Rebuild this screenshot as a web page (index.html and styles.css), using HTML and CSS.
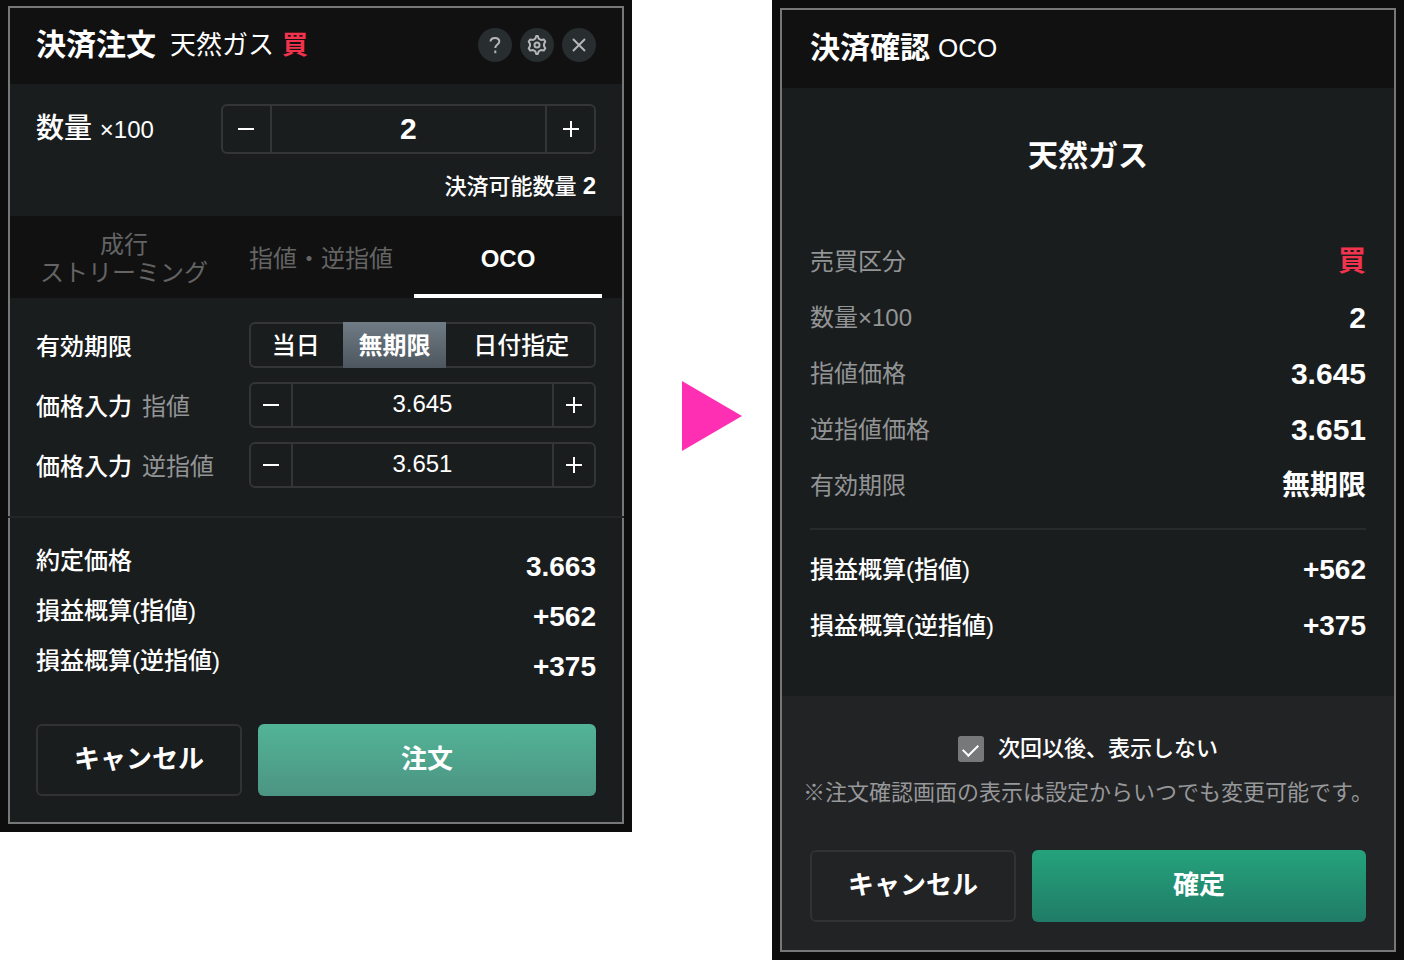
FILE: index.html
```html
<!DOCTYPE html>
<html lang="ja">
<head>
    <meta charset="UTF-8">
    <meta name="viewport" content="width=device-width, initial-scale=1.0">
    <title>決済注文</title>
    <link rel="stylesheet" href="styles.css">
</head>
<body>
    <main class="flow">
        <div class="step">
            <section class="screen">
                <div class="panel order">
                    <header class="panel-header">
                        <h1>決済注文</h1>
                        <span class="symbol">天然ガス</span>
                        <span class="side">買</span>
                        <div class="tools">
                            <button type="button" class="tool" aria-label="ヘルプ">
                                <svg viewBox="0 0 34 34"><path d="M12.5 13.5c.2-2.3 2-3.5 4.500-3.500s4.300 1.400 4.300 3.600c0 3-4 3-4 6.400" /><path d="M17.300 22.500v2.700" /></svg>
                            </button>
                            <button type="button" class="tool" aria-label="設定">
                                <svg viewBox="0 0 34 34"><path d="M15.300 10.700 16.200 8h1.600l.9 2.700 2.200 1.300 2.800-.6 1.600 2.200-1.300 2.400v2l1.300 2.400-1.600 2.200-2.800-.6-2.200 1.300-.9 2.700h-1.600l-.9-2.700-2.200-1.300-2.800.6-1.600-2.200L10 18v-2l-1.300-2.400 1.600-2.200 2.800.6z" /><circle cx="17" cy="17" r="2.500" /></svg>
                            </button>
                            <button type="button" class="tool" aria-label="閉じる">
                                <svg viewBox="0 0 34 34"><path d="M11 11l12 12M23 11L11 23" /></svg>
                            </button>
                        </div>
                    </header>

                    <div class="quantity">
                        <div class="field">
                            <label class="big-label" for="qty">数量 <small>×100</small></label>
                            <div class="stepper large">
                                <button type="button" aria-label="減らす"><svg viewBox="0 0 16 16"><path d="M0 8h16" /></svg></button>
                                <input type="text" id="qty" value="2">
                                <button type="button" aria-label="増やす"><svg viewBox="0 0 16 16"><path d="M0 8h16M8 0v16" /></svg></button>
                            </div>
                        </div>
                        <p class="available">決済可能数量 <b>2</b></p>
                    </div>

                    <nav class="tabs">
                        <button type="button">成行<br>ストリーミング</button>
                        <button type="button">指値・逆指値</button>
                        <button type="button" class="active">OCO</button>
                    </nav>

                    <div class="conditions">
                        <div class="field">
                            <span class="label">有効期限</span>
                            <div class="segments">
                                <button type="button">当日</button>
                                <button type="button" class="selected">無期限</button>
                                <button type="button">日付指定</button>
                            </div>
                        </div>
                        <div class="field">
                            <label class="label" for="limit">価格入力<span>指値</span></label>
                            <div class="stepper">
                                <button type="button" aria-label="減らす"><svg viewBox="0 0 16 16"><path d="M0 8h16" /></svg></button>
                                <input type="text" id="limit" value="3.645">
                                <button type="button" aria-label="増やす"><svg viewBox="0 0 16 16"><path d="M0 8h16M8 0v16" /></svg></button>
                            </div>
                        </div>
                        <div class="field">
                            <label class="label" for="stop">価格入力<span>逆指値</span></label>
                            <div class="stepper">
                                <button type="button" aria-label="減らす"><svg viewBox="0 0 16 16"><path d="M0 8h16" /></svg></button>
                                <input type="text" id="stop" value="3.651">
                                <button type="button" aria-label="増やす"><svg viewBox="0 0 16 16"><path d="M0 8h16M8 0v16" /></svg></button>
                            </div>
                        </div>
                    </div>

                    <dl class="summary">
                        <div><dt>約定価格</dt><dd>3.663</dd></div>
                        <div><dt>損益概算(指値)</dt><dd>+562</dd></div>
                        <div><dt>損益概算(逆指値)</dt><dd>+375</dd></div>
                    </dl>

                    <div class="actions">
                        <button type="button" class="cancel">キャンセル</button>
                        <button type="button" class="submit">注文</button>
                    </div>
                </div>
            </section>
            <svg class="arrow" viewBox="0 0 60 70"><path d="M0 0l60 35L0 70z" /></svg>
        </div>

        <section class="screen">
            <div class="panel confirm">
                <header class="panel-header">
                    <h1>決済確認</h1>
                    <span class="symbol">OCO</span>
                </header>

                <div class="details">
                    <h2>天然ガス</h2>
                    <dl>
                        <div><dt>売買区分</dt><dd class="side">買</dd></div>
                        <div><dt>数量×100</dt><dd class="number">2</dd></div>
                        <div><dt>指値価格</dt><dd class="number">3.645</dd></div>
                        <div><dt>逆指値価格</dt><dd class="number">3.651</dd></div>
                        <div><dt>有効期限</dt><dd>無期限</dd></div>
                    </dl>
                    <dl class="estimate">
                        <div><dt>損益概算(指値)</dt><dd>+562</dd></div>
                        <div><dt>損益概算(逆指値)</dt><dd>+375</dd></div>
                    </dl>
                </div>

                <footer>
                    <label class="skip"><input type="checkbox" checked>次回以後、表示しない</label>
                    <p class="note">※注文確認画面の表示は設定からいつでも変更可能です。</p>
                    <div class="actions">
                        <button type="button" class="cancel">キャンセル</button>
                        <button type="button" class="submit">確定</button>
                    </div>
                </footer>
            </div>
        </section>
    </main>
</body>
</html>
```
FILE: styles.css
```css
* {
    box-sizing: border-box;
}
body {
    margin: 0;
    background-color: white;
    color: white;
    font-family: "Liberation Sans", "Noto Sans CJK JP", sans-serif;
    font-size: 24px;
}
h1, h2, p, dl, dd {
    margin: 0;
}
button, input {
    margin: 0;
    padding: 0;
    border: none;
    background: none;
    color: inherit;
    font: inherit;
}
button {
    cursor: pointer;
}
svg {
    display: block;
    fill: none;
    stroke: currentColor;
    stroke-width: 2;
}
.flow {
    display: grid;
    grid-template-columns: 772fr 632fr;
    align-items: start;
}
.step {
    display: flex;
    align-items: center;
}
.step .screen {
    flex: 1;
    padding-top: 6px;
}
.screen {
    padding: 8px;
    background-color: #0d0d0d;
}
.arrow {
    width: 60px;
    height: 70px;
    margin: 0 30px 0 50px;
    fill: #ff2fb4;
    stroke: none;
}
.panel {
    border: 2px solid #777;
    background-color: #1a1d1e;
}

/* header */
.panel-header {
    display: flex;
    align-items: center;
    height: 76px;
    padding: 0 26px 2px;
    background-color: #111;
}
.panel-header h1 {
    font-size: 30px;
    line-height: 44px;
}
.symbol {
    margin-left: 14px;
    font-size: 26px;
}
.side {
    color: #f2334d;
    font-weight: bold;
}
.order .symbol, .order .side {
    padding-bottom: 6px;
}
.panel-header .side {
    margin-left: 8px;
    font-size: 26px;
}
.tools {
    display: flex;
    gap: 8px;
    margin-left: auto;
}
.tool {
    width: 34px;
    height: 34px;
    border-radius: 50%;
    background-color: #282d30;
    color: #b4b6b7;
}
.tool svg {
    stroke-linejoin: round;
}

/* form fields */
.field {
    display: flex;
    align-items: center;
    justify-content: space-between;
}
.quantity {
    height: 132px;
    padding: 20px 26px 0;
}
.big-label {
    padding-bottom: 6px;
    font-size: 28px;
    font-weight: 500;
}
.big-label small {
    font-size: 24px;
    font-weight: normal;
}
.label {
    padding-bottom: 2px;
    font-weight: 500;
}
.label span {
    margin-left: 10px;
    color: #929495;
    font-weight: normal;
}
.stepper {
    display: flex;
    width: 62%;
    height: 46px;
    border: 2px solid #333537;
    border-radius: 6px;
}
.stepper button {
    display: flex;
    align-items: center;
    justify-content: center;
    width: 40px;
}
.stepper svg {
    width: 16px;
    height: 16px;
}
.stepper input {
    flex: 1;
    min-width: 0;
    padding-bottom: 2px;
    border: solid #333537;
    border-width: 0 2px;
    text-align: center;
}
.stepper.large {
    width: 67%;
    height: 50px;
}
.large button {
    width: 47px;
}
.large input {
    padding: 0;
    font-size: 30px;
    font-weight: bold;
}
.available {
    margin-top: 16px;
    font-size: 22px;
    font-weight: 500;
    line-height: 32px;
    text-align: right;
}
.available b {
    font-size: 24px;
}
.tabs {
    display: grid;
    grid-template-columns: 208fr 186fr 188fr;
    height: 82px;
    padding: 0 20px 0 10px;
    background-color: #111;
}
.tabs button {
    padding-top: 4px;
    color: #646464;
    line-height: 28px;
    white-space: nowrap;
}
.tabs .active {
    padding-top: 8px;
    border-bottom: 4px solid white;
    color: white;
    font-weight: bold;
}
.conditions {
    display: flex;
    flex-direction: column;
    gap: 14px;
    padding: 24px 26px 28px;
}
.segments {
    display: grid;
    grid-template-columns: 94fr 104fr 150fr;
    width: 62%;
    height: 46px;
    border-radius: 6px;
    box-shadow: inset 0 0 0 2px #333537;
    font-weight: 500;
}
.segments button {
    padding-bottom: 4px;
}
.segments .selected {
    background: linear-gradient(#6f7b85, #4d565e);
    font-weight: bold;
}

/* prices */
dl div {
    display: flex;
    justify-content: space-between;
}
dd {
    font-size: 28px;
    font-weight: bold;
}
.summary {
    margin: 0 -2px;
    padding: 24px 28px 32px;
    border-top: 2px solid #232627;
}
.summary dt {
    font-weight: 500;
    line-height: 38px;
}
.summary dd {
    line-height: 50px;
}

/* buttons */
.actions {
    display: flex;
    gap: 16px;
}
.order .actions {
    padding: 0 26px 26px;
}
.actions button {
    height: 72px;
    padding-bottom: 8px;
    border-radius: 6px;
    font-size: 26px;
    font-weight: bold;
}
.actions .cancel {
    width: 206px;
    border: 2px solid #303234;
}
.actions .submit {
    flex: 1;
    background: linear-gradient(#52b496, #4c9483);
}
.confirm .submit {
    background: linear-gradient(#25a27c, #207c66);
}

/* confirmation */
.confirm .panel-header {
    height: 78px;
    padding: 0 28px 2px;
}
.confirm .symbol {
    margin-left: 8px;
}
.details {
    padding: 46px 28px 42px;
}
.details h2 {
    margin-bottom: 56px;
    font-size: 30px;
    line-height: 44px;
    text-align: center;
}
.details dl div {
    line-height: 56px;
}
.details dt {
    color: #929495;
}
.details .number {
    font-size: 30px;
}
.estimate {
    margin-top: 14px;
    padding-top: 12px;
    border-top: 2px solid #282b2c;
}
.details .estimate dt {
    color: white;
    font-weight: 500;
}
footer {
    padding: 36px 28px 28px;
    background-color: #222325;
}
.skip {
    display: flex;
    align-items: center;
    justify-content: center;
    gap: 14px;
    font-size: 22px;
    font-weight: 500;
    line-height: 34px;
}
.skip input {
    display: grid;
    place-items: center;
    width: 26px;
    height: 26px;
    border-radius: 3px;
    background-color: #77787a;
    appearance: none;
}
.skip input:checked::before {
    content: "";
    width: 13px;
    height: 7px;
    margin-bottom: 2px;
    border: solid white;
    border-width: 0 0 2px 2px;
    transform: rotate(-45deg);
}
.note {
    margin: 10px -8px 40px;
    color: #97989a;
    font-size: 22px;
    line-height: 34px;
    text-align: center;
    white-space: nowrap;
}
```
